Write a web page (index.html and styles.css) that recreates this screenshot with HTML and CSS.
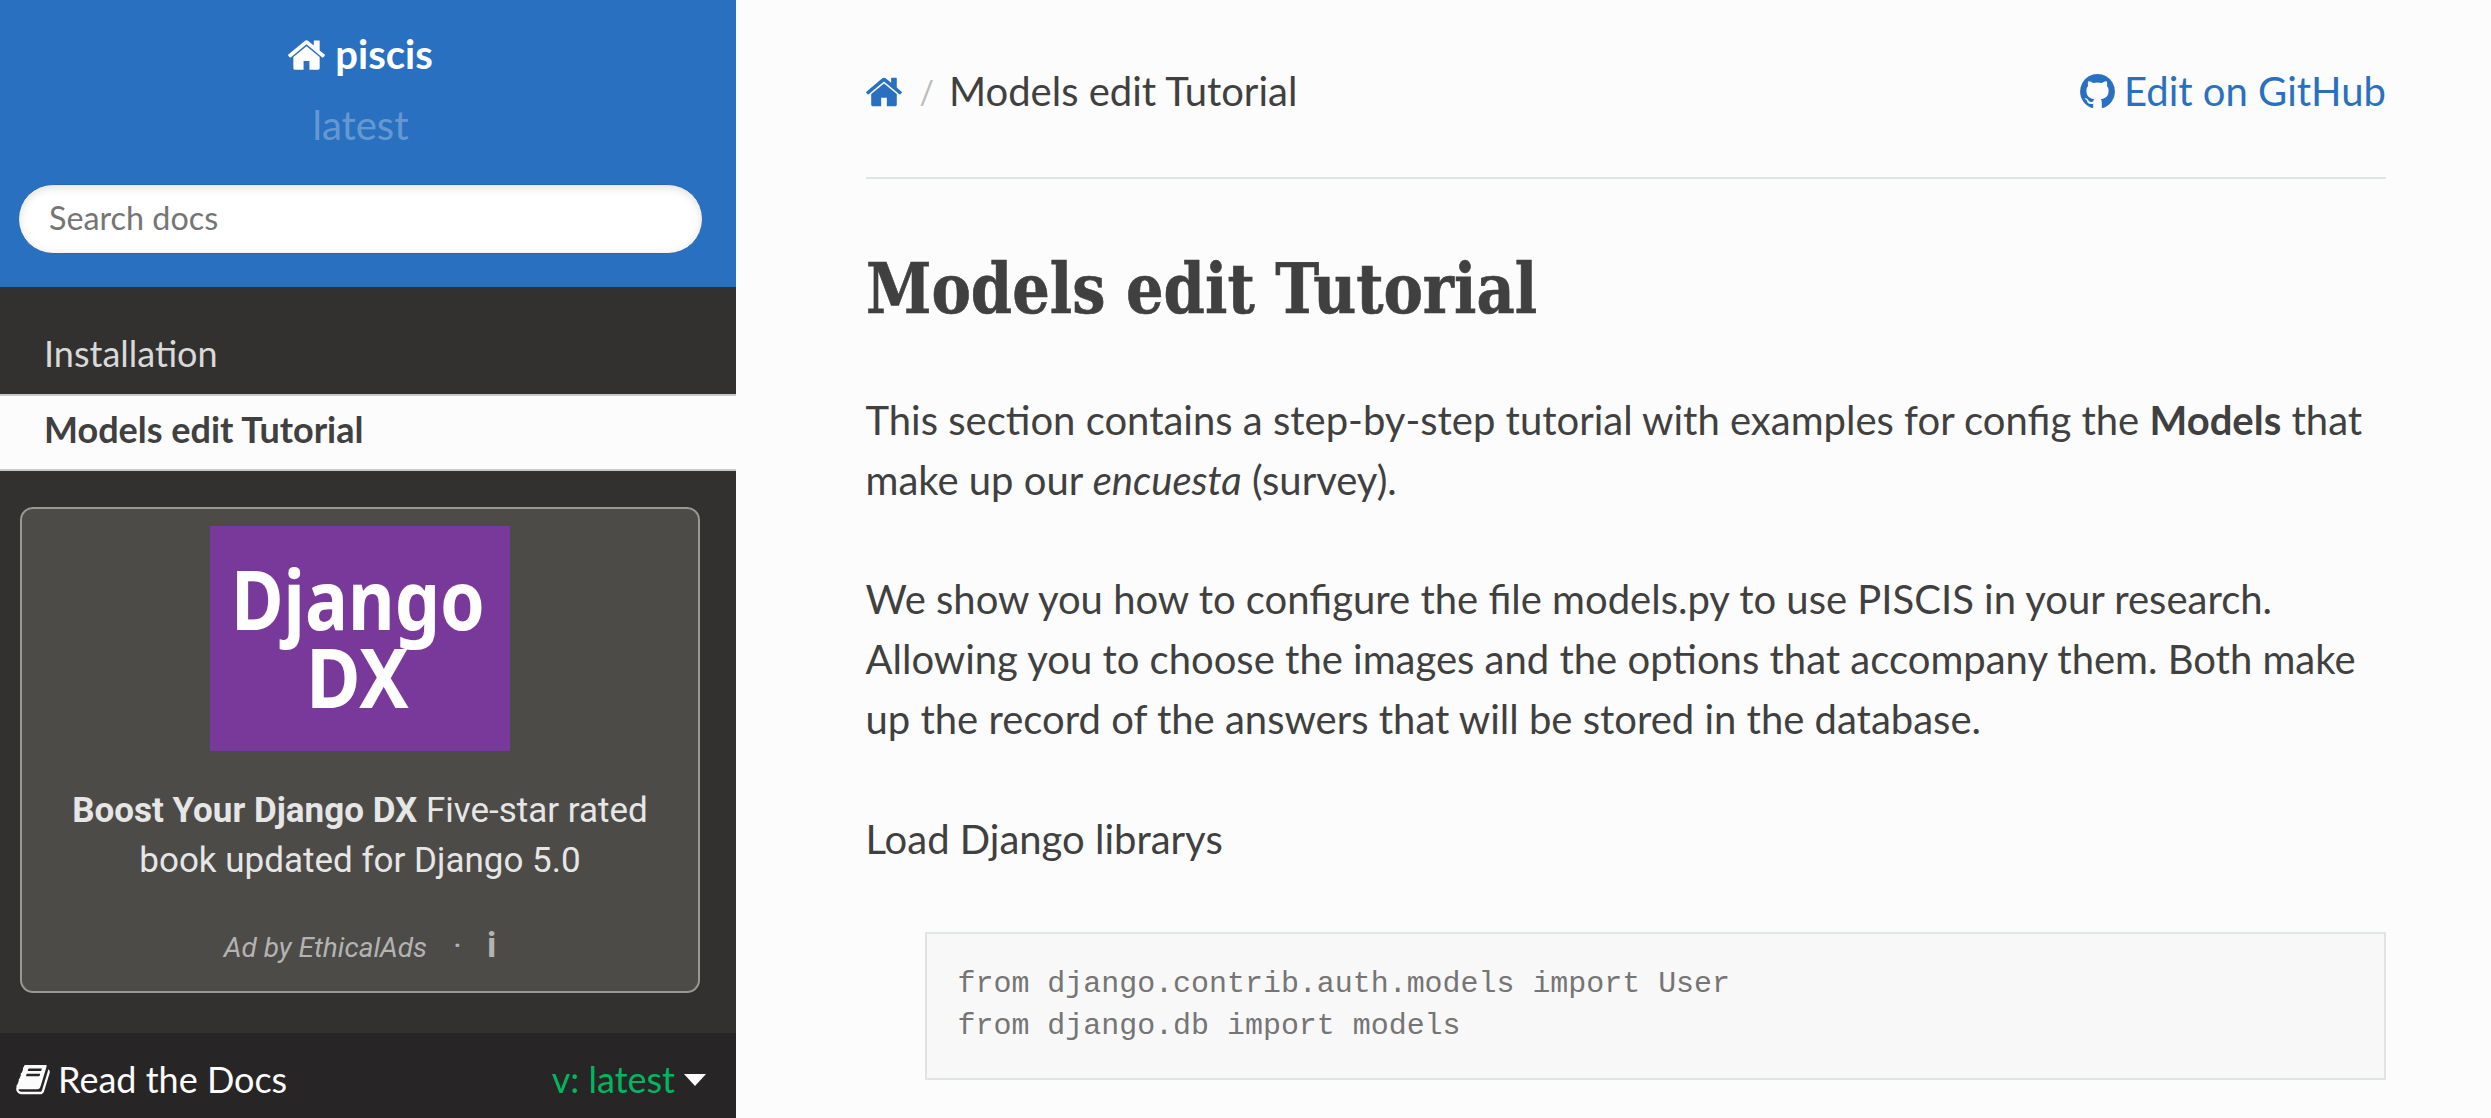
FILE: index.html
```html
<!DOCTYPE html>
<html lang="en">
<head>
<meta charset="utf-8">
<title>Models edit Tutorial — piscis</title>
<link rel="stylesheet" href="styles.css">
</head>
<body>
<svg class="sprite" aria-hidden="true">
  <symbol id="home" viewBox="22 253 1620 1283"><path d="M1408 992v480q0 26-19 45t-45 19h-384v-384h-256v384h-384q-26 0-45-19t-19-45v-480q0-1 .5-3t.5-3l575-474 575 474q1 2 1 6zm223-69l-62 74q-8 9-21 11h-3q-13 0-21-7l-692-577-692 577q-12 8-24 7-13-2-21-11l-62-74q-8-10-7-23.500t11-21.500l719-599q32-26 76-26t76 26l244 204v-195q0-14 9-23t23-9h192q14 0 23 9t9 23v408l219 182q10 8 11 21.500t-7 23.500z"/></symbol>
  <symbol id="github" viewBox="128 128 1536 1500"><path d="M896 128q209 0 385.500 103t279.500 279.500 103 385.500q0 251-146.500 451.500t-378.500 277.500q-27 5-40-7t-13-30q0-3 .5-76.500t.5-134.500q0-97-52-142 57-6 102.500-18t94-39 81-66.500 53-105 20.500-150.500q0-119-79-206 37-91-8-204-28-9-81 11t-92 44l-38 24q-93-26-192-26t-192 26q-16-11-42.500-27t-83.500-38.500-85-13.500q-45 113-8 204-79 87-79 206 0 85 20.500 150t52.500 105 80.500 67 94 39 102.500 18q-39 36-49 103-21 10-45 15t-57 5-65.500-21.500-55.500-62.500q-19-32-48.500-52t-49.500-24l-20-3q-21 0-29 4.500t-5 11.500 9 14 13 12l7 5q22 10 43.500 38t31.500 51l10 23q13 38 44 61.500t67 30 69.500 7 55.500-3.500l23-4q0 38 .5 88.500t.5 54.500q0 18-13 30t-40 7q-232-77-378.500-277.500t-146.500-451.500q0-209 103-385.500t279.500-279.500 385.500-103z"/></symbol>
  <symbol id="book" viewBox="63 256 1665 1536"><path transform="translate(63 256)" d="M1639 266q40 57 18 129l-275 906q-19 64-76.500 107.500t-122.500 43.500h-923q-77 0-148.500-53.500t-99.500-131.500q-24-67-2-127 0-4 3-27t4-37q1-8-3-21.500t-3-19.500q2-11 8-21t16.500-23.500 16.500-23.500q23-38 45-91.500t30-91.500q3-10 .5-30t-.5-28q3-11 17-28t17-23q21-36 42-92t25-90q1-9-2.500-32t.5-28q4-13 22-30.500t22-22.500q19-26 42.500-84.500t27.500-96.500q1-8-3-25.500t-2-26.500q2-8 9-18t18-23 17-21q8-12 16.500-30.500t15-35 16-36 19.500-32 26.500-23.500 36-11.500 47.500 5.500l-1 3q38-9 51-9h761q74 0 114 56t18 130l-274 906q-36 119-71.500 153.500t-128.500 34.500h-869q-27 0-38 15-11 16-1 43 24 70 144 70h923q29 0 56-15.500t35-41.500l300-987q7-22 5-57 38 15 59 43zm-1064 2q-4 13 2 22.500t20 9.500h608q13 0 25.500-9.500t16.500-22.500l21-64q4-13-2-22.500t-20-9.500h-608q-13 0-25.500 9.500t-16.500 22.500zm-83 256q-4 13 2 22.500t20 9.500h608q13 0 25.500-9.500t16.500-22.500l21-64q4-13-2-22.500t-20-9.500h-608q-13 0-25.500 9.500t-16.500 22.500z"/></symbol>
</svg>
<div class="page">
  <nav class="side">
    <header class="side-head">
      <a class="brand"><svg class="brand-icon"><use href="#home"/></svg>piscis</a>
      <div class="version">latest</div>
      <input class="search" type="text" placeholder="Search docs">
    </header>
    <ul class="menu">
      <li class="item">Installation</li>
      <li class="item current">Models edit Tutorial</li>
    </ul>
    <aside class="ad">
      <svg class="ad-image" viewBox="0 0 300 225">
        <rect width="300" height="225" fill="#79399b"/>
        <text x="21" y="103.500" textLength="254" lengthAdjust="spacingAndGlyphs">Django</text>
        <text x="96" y="181.500" textLength="103" lengthAdjust="spacingAndGlyphs">DX</text>
      </svg>
      <p class="ad-text"><b>Boost Your Django DX</b> Five-star rated<br>book updated for Django 5.0</p>
      <p class="ad-by"><i>Ad by EthicalAds</i><span class="dot">·</span><b class="info">i</b></p>
    </aside>
    <footer class="rtd">
      <svg class="book"><use href="#book"/></svg>
      <span class="rtd-name">Read the Docs</span>
      <span class="rtd-version">v: latest</span>
      <span class="caret"></span>
    </footer>
  </nav>
  <main class="content">
    <div class="crumbs">
      <svg class="crumb-home"><use href="#home"/></svg>
      <span class="slash">/</span>
      <span>Models edit Tutorial</span>
      <a class="edit"><svg class="gh"><use href="#github"/></svg>Edit on GitHub</a>
    </div>
    <h1><span class="title">Models edit Tutorial</span></h1>
    <p>This section contains a step-by-step tutorial with examples for config the <b>Models</b> that<br>make up our <i>encuesta</i> (survey).</p>
    <p>We show you how to configure the file models.py to use PISCIS in your research.<br>Allowing you to choose the images and the options that accompany them. Both make<br>up the record of the answers that will be stored in the database.</p>
    <p>Load Django librarys</p>
    <pre class="code">from django.contrib.auth.models import User
from django.db import models</pre>
  </main>
</div>
</body>
</html>
```
FILE: styles.css
```css
* { box-sizing: border-box; }
body {
  margin: 0;
  overflow: hidden;
  background: #fcfcfc;
  color: #404040;
  font: 40px/59.8px Lato, sans-serif;
}
.sprite { position: absolute; width: 0; height: 0; }
svg { fill: currentColor; }
.page { display: flex; height: 1118px; }

/* Sidebar */
.side {
  display: flex;
  flex-direction: column;
  flex: 0 0 735px;
  background: #33312f;
}
.side-head {
  display: flex;
  flex-direction: column;
  align-items: center;
  height: 287px;
  padding: 25px 33px 0 18px;
  background: #2971c0;
}
.brand {
  display: flex;
  align-items: center;
  height: 60px;
  gap: 10px;
  color: #fff;
  font-weight: 700;
}
.brand-icon { width: 37px; height: 30px; }
.version {
  height: 60px;
  margin-top: 11px;
  color: rgba(255, 255, 255, .3);
}
.search {
  width: 685px;
  height: 70px;
  margin-top: 28px;
  padding: 0 30px 4px;
  border: 1px solid #2469b3;
  border-radius: 35px;
  background: #fff;
  box-shadow: inset 0 2px 10px #ddd;
  font: 32.3px Lato, sans-serif;
}
.search::placeholder { color: #757575; }
.menu {
  margin: 0;
  padding: 30px 0 0;
  list-style: none;
  font-size: 36px;
}
.item {
  height: 77px;
  padding-left: 44px;
  line-height: 72px;
  color: #d9d9d9;
}
.current {
  border-top: 2px solid #c9c9c9;
  border-bottom: 2px solid #c9c9c9;
  background: #fcfcfc;
  color: #404040;
  font-weight: 700;
  line-height: 67px;
}

/* Sponsor card */
.ad {
  display: flex;
  flex-direction: column;
  align-items: center;
  width: 680px;
  height: 486px;
  margin: 36px 0 0 20px;
  padding-top: 17px;
  border: 2px solid #999896;
  border-radius: 13px;
  background: #4d4b48;
  color: #e6e6e6;
  font-family: Roboto, sans-serif;
}
.ad-image { width: 300px; height: 225px; }
.ad-image text { fill: #fff; font: 700 83px "Noto Sans", sans-serif; }
.ad-text {
  margin: 35px 0 0;
  font-size: 35px;
  line-height: 50px;
  text-align: center;
}
.ad-by {
  display: flex;
  align-items: baseline;
  margin: 34px 0 0;
  color: #b3b3b3;
  font-size: 28px;
  line-height: 50px;
}
.dot { margin: 0 25px 0 26px; font-size: 34px; }
.info { font-size: 35px; }

/* Version bar */
.rtd {
  display: flex;
  align-items: center;
  height: 85px;
  margin-top: auto;
  padding: 9px 30px 0 16px;
  background: #272525;
  color: #fcfcfc;
  font-size: 36px;
}
.book { width: 34px; height: 31px; }
.rtd-name { margin-left: 8px; }
.rtd-version { margin-left: auto; color: #00b760; }
.caret {
  margin-left: 9px;
  border: 11px solid transparent;
  border-top: 12px solid #fff;
  border-bottom: 0;
}

/* Document */
.content { flex: 1; padding: 61px 105px 0 129.5px; }
.crumbs {
  display: flex;
  align-items: center;
  height: 118px;
  padding-bottom: 55px;
  border-bottom: 2px solid #e1e4e5;
}
.crumb-home { width: 36px; height: 30px; color: #2971c0; }
.slash { margin: 0 15px 0 18px; color: #bbb; font-size: 32px; }
.edit {
  display: flex;
  align-items: center;
  gap: 9px;
  margin-left: auto;
  color: #2971c0;
}
.gh { width: 35px; height: 34px; }
h1 {
  height: 93px;
  margin: 64px 0 55px;
  font: 700 69px/92px "Roboto Slab", "DejaVu Serif Condensed", "DejaVu Serif", serif;
}
.title {
  display: inline-block;
  transform: scaleX(.952);
  transform-origin: 0 50%;
  -webkit-text-stroke: .6px currentColor;
}
p { margin: 0 0 59.8px; white-space: nowrap; }
.code {
  height: 148px;
  margin: 62.5px 0 0 59px;
  padding: 29.5px 31px;
  border: 2px solid #e1e4e5;
  background: #f8f8f8;
  color: #757575;
  font: 29.95px/42px "Liberation Mono", monospace;
}
```
